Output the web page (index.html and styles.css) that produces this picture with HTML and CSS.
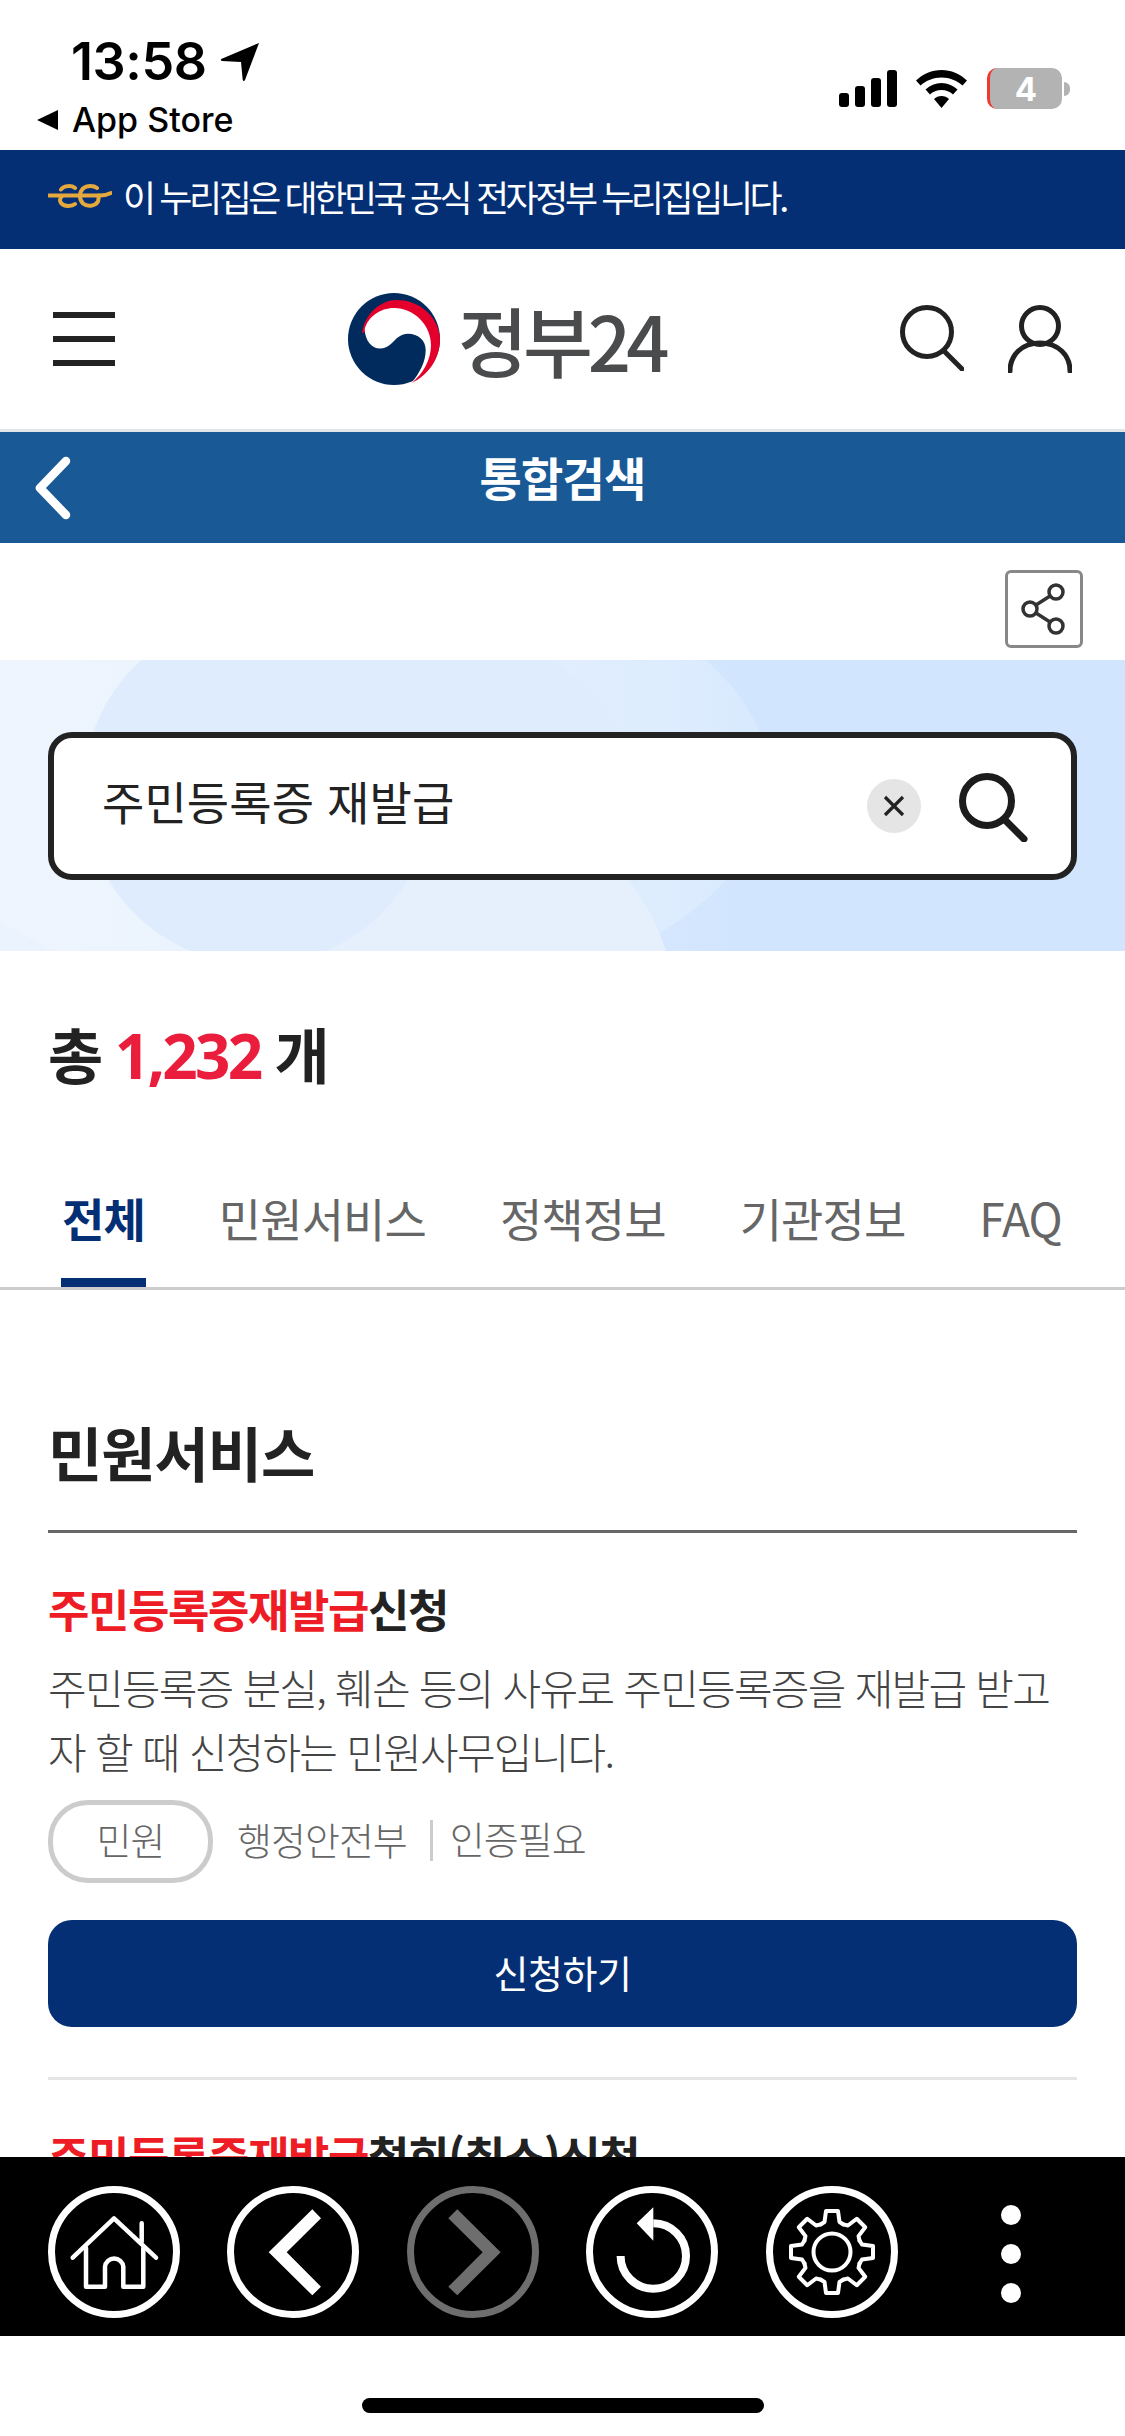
FILE: index.html
```html
<!DOCTYPE html>
<html lang="ko">
<head>
    <meta charset="UTF-8">
    <meta name="viewport" content="width=device-width, initial-scale=1.0">
    <title>정부24 - 통합검색</title>
    <link rel="stylesheet" href="styles.css">
</head>
<body>
    <div class="app">
        <div class="page">
            <!-- iOS status bar -->
            <div class="status">
                <div class="status-left">
                    <div class="time-row">
                        <span class="time">13:58</span>
                        <svg class="loc" width="40" height="40" viewBox="0 0 40 40"><path d="M39 1 25 38c-.6 1.400-2 1.300-2.300-.2L21 20 2 19c-1.500-.3-1.600-1.800-.2-2.300z" fill="#000"/></svg>
                    </div>
                    <div class="back-row">
                        <svg width="21" height="20" viewBox="0 0 21 20"><path d="M21 0v20L0 10z" fill="#000"/></svg>
                        <span>App Store</span>
                    </div>
                </div>
                <div class="status-right">
                    <div class="signal"><i class="b1"></i><i class="b2"></i><i class="b3"></i><i class="b4"></i></div>
                    <svg width="51" height="38" viewBox="0 0 51 38"><path d="M25.500 0C35 0 44 4 51 10.500l-4.500 5C41 10.500 33.500 7.500 25.500 7.500S10 10.500 4.500 15.500L0 10.500C7 4 16 0 25.500 0z" fill="#000"/><path d="M25.500 13c6 0 11.500 2.400 16 6.500l-4.500 5c-3-2.800-7-4.500-11.500-4.500S17 21.700 14 24.500l-4.500-5C14 15.400 19.500 13 25.500 13z" fill="#000"/><path d="M25.500 26c3 0 5.500 1 7.500 3L25.500 38 18 29c2-2 4.500-3 7.500-3z" fill="#000"/></svg>
                    <div class="battery"><span>4</span></div>
                    <div class="nib"></div>
                </div>
            </div>

            <div class="gov-band">
                <svg width="64" height="24" viewBox="0 0 64 24" fill="none" stroke="#e5a83c" stroke-width="4" stroke-linecap="round"><path d="M1 11.500h38M38 11.500h14c4 0 8-1 11-2.500"/><path d="M27 4c-3-2.500-11-3-14 1.500M27 20c-3 2.500-11 3-14-1-2-3-1-5 1-7"/><path d="M49 4c-3-2.500-10-3-14 .5-4 4-4 11 0 15 4 3.500 12 3 15-2l1-6"/></svg>
                <span>이 누리집은 대한민국 공식 전자정부 누리집입니다.</span>
            </div>

            <div class="site-head">
                <div class="burger"><i></i><i></i><i></i></div>
                <div class="logo">
                    <svg width="92" height="92" viewBox="0 0 92 92">
                        <circle cx="46" cy="46" r="46" fill="#002b5c"/>
                        <path d="M14 40C17 20 33 7 49 7c23 0 43 18 43 40 0 18-12 36-28.700 43C75 81 80.500 67 80.500 54L75 40 40 28 20 38z" fill="#e4002b"/>
                        <path d="M16.700 36C20 24 32 15 46 15c20 0 37 17 37 37 0 15-8 29-19.700 38C72 80 77.700 68 77.700 57c0-10-7.700-16.300-17.700-16.300-8 0-12 5.300-16 9.300-4 4-8 5.500-12 5.500-8 0-15-7.500-15.300-19.500z" fill="#fff"/>
                    </svg>
                    <span>정부24</span>
                </div>
                <div class="head-icons">
                    <svg width="64" height="66" viewBox="0 0 64 66" fill="none" stroke="#222" stroke-width="5" stroke-linecap="round"><circle cx="27" cy="27" r="24.500"/><path d="M44 46l18 18"/></svg>
                    <svg width="64" height="68" viewBox="0 0 64 68" fill="none" stroke="#222" stroke-width="5" stroke-linecap="round"><circle cx="32" cy="21" r="18.500"/><path d="M2 66c0-16 12-28 30-28s30 12 30 28"/></svg>
                </div>
            </div>

            <div class="title-bar">
                <svg class="title-back" width="40" height="64" viewBox="0 0 40 64" fill="none" stroke="#fff" stroke-width="8.500" stroke-linecap="round" stroke-linejoin="round"><path d="M33 5 7 32l26 27"/></svg>
                <h1>통합검색</h1>
            </div>

            <div class="share-row">
                <div class="share-btn">
                    <svg width="46" height="52" viewBox="0 0 46 52" fill="none" stroke="#333" stroke-width="3.500"><circle cx="35" cy="9" r="7"/><circle cx="9" cy="26" r="7"/><circle cx="35" cy="43" r="7"/><path d="M29 13 15 22M15 30l14 9"/></svg>
                </div>
            </div>

            <div class="hero">
                <div class="search-box">
                    <span class="query">주민등록증 재발급</span>
                    <div class="clear">
                        <svg width="24" height="24" viewBox="0 0 24 24" fill="none" stroke="#222" stroke-width="3.200"><path d="M3 3l18 18M21 3 3 21"/></svg>
                    </div>
                    <svg class="search-go" width="70" height="70" viewBox="0 0 70 70" fill="none" stroke="#1c1c1c" stroke-width="7" stroke-linecap="round"><circle cx="29" cy="29" r="24.500"/><path d="M47 48l19 19"/></svg>
                </div>
            </div>

            <div class="total">총 <b>1,232</b> 개</div>

            <div class="tabs">
                <a class="tab active">전체</a>
                <a class="tab">민원서비스</a>
                <a class="tab">정책정보</a>
                <a class="tab">기관정보</a>
                <a class="tab">FAQ</a>
            </div>

            <div class="section">
                <h2>민원서비스</h2>
                <div class="item">
                    <h3><em>주민등록증재발급</em>신청</h3>
                    <p>주민등록증 분실, 훼손 등의 사유로 주민등록증을 재발급 받고자 할 때 신청하는 민원사무입니다.</p>
                    <div class="meta">
                        <span class="pill">민원</span>
                        <span class="org">행정안전부</span>
                        <span class="auth">인증필요</span>
                    </div>
                    <div class="apply">신청하기</div>
                </div>
                <div class="item">
                    <h3><em>주민등록증재발급</em>철회(취소)신청</h3>
                </div>
            </div>
        </div>

        <!-- app toolbar -->
        <div class="toolbar">
            <div class="tool">
                <svg width="132" height="132" viewBox="0 0 132 132" fill="none" stroke="#fff" stroke-width="4.500" stroke-linecap="round" stroke-linejoin="round">
                    <circle class="ring" cx="66" cy="66" r="62.500"/>
                    <path d="M24.700 71.700 66 32.300l42 39.400M93.700 37.300v18.400"/>
                    <path d="M38 62v38.700h19v-20a9.200 9.200 0 0 1 18.300 0v20h20V62"/>
                </svg>
            </div>
            <div class="tool">
                <svg width="132" height="132" viewBox="0 0 132 132" fill="none">
                    <circle class="ring" cx="66" cy="66" r="62.500" stroke="#fff"/>
                    <path d="M41.700 66.300 85.300 23.300l8.700 9-34.300 34 34.300 34.400-8.700 8.600z" fill="#fff"/>
                </svg>
            </div>
            <div class="tool">
                <svg width="132" height="132" viewBox="0 0 132 132" fill="none">
                    <circle class="ring" cx="66" cy="66" r="62.500" stroke="#6e6e6e"/>
                    <path d="M93.700 66.300 50.300 23.300l-9 9 34.400 34-34.400 34.400 9 8.600z" fill="#6e6e6e"/>
                </svg>
            </div>
            <div class="tool">
                <svg width="132" height="132" viewBox="0 0 132 132" fill="none">
                    <circle class="ring" cx="66" cy="66" r="62.500" stroke="#fff"/>
                    <path d="M67.300 37.300A32.700 32.700 0 1 1 34.600 70" stroke="#fff" stroke-width="8"/>
                    <path d="M50.700 37.300 67.300 21.300v33.400z" fill="#fff"/>
                </svg>
            </div>
            <div class="tool">
                <svg width="132" height="132" viewBox="0 0 132 132" fill="none" stroke="#fff">
                    <circle class="ring" cx="66" cy="66" r="62.500"/>
                    <circle cx="66" cy="66" r="18.500" stroke-width="4"/>
                    <g transform="translate(66 66)" stroke-width="4" stroke-linejoin="round" stroke-linecap="round">
                        <path id="tooth" d="M-11.500-27.500-7.500-30-6-41H6L7.500-30 11.500-27.500"/>
                        <use href="#tooth" transform="rotate(45)"/>
                        <use href="#tooth" transform="rotate(90)"/>
                        <use href="#tooth" transform="rotate(135)"/>
                        <use href="#tooth" transform="rotate(180)"/>
                        <use href="#tooth" transform="rotate(225)"/>
                        <use href="#tooth" transform="rotate(270)"/>
                        <use href="#tooth" transform="rotate(315)"/>
                    </g>
                </svg>
            </div>
            <div class="tool dots"><i></i><i></i><i></i></div>
        </div>

        <div class="home-area"><div class="home-bar"></div></div>
    </div>
</body>
</html>
```
FILE: styles.css
```css
/* Reset & base */
*{margin:0;padding:0;box-sizing:border-box}
html,body{height:2436px;overflow:hidden;background:#fff}
body{font-family:'Noto Sans CJK KR','Noto Sans',sans-serif;color:#222}
.app{width:1125px;height:2436px;display:flex;flex-direction:column}
.page{flex:1;min-height:0;overflow:hidden}
/* Status bar */
.status{height:150px;display:flex;justify-content:space-between;font-family:Inter,sans-serif;color:#000}
.status-left{padding:38px 0 0 37px}
.time-row{display:flex;align-items:center;gap:13px;padding-left:34px;height:48px}
.time{font-size:52px;font-weight:600;line-height:48px;letter-spacing:-.4px}
.back-row{display:flex;align-items:center;gap:14px;margin-top:17px;height:34px}
.back-row span{font-size:34px;font-weight:500;line-height:34px}
.status-right{display:flex;align-items:flex-start;padding:68px 55px 0 0}
.signal{display:flex;align-items:flex-end;gap:6px;height:37px;margin:2px 19px 0 0}
.signal i{display:block;width:10px;border-radius:3px;background:#000}
.signal .b1{height:14px}
.signal .b2{height:21px}
.signal .b3{height:29px}
.signal .b4{height:37px}
.status-right svg{margin:2px 20px 0 0}
.battery{width:75px;height:41px;border-radius:10px;background:#b3b3b3;border-left:3px solid #f0392e;display:flex;align-items:center;justify-content:center;color:#fff;font-size:33px;font-weight:700}
.nib{width:6px;height:14px;margin:14px 0 0 2px;background:#b3b3b3;border-radius:0 7px 7px 0}
/* Government band */
.gov-band{height:99px;background:#042f75;color:#fff;display:flex;align-items:center;gap:11px;padding:0 0 8px 48px;font-size:36px;letter-spacing:-3.45px}
/* Site header */
.site-head{height:183px;border-bottom:3px solid #e1e4e8;display:flex;align-items:center;padding:0 53px}
.burger{width:62px;display:flex;flex-direction:column;gap:18px}
.burger i{display:block;height:6px;background:#222}
.logo{display:flex;align-items:center;gap:18px;margin-left:233px}
.logo span{font-size:76px;font-weight:500;letter-spacing:-5px;color:#4a4b4d;line-height:92px}
.head-icons{display:flex;gap:44px;margin-left:auto}
/* Title bar */
.title-bar{height:111px;background:#195a96;display:flex;align-items:center;justify-content:center;position:relative}
.title-back{position:absolute;left:33px;top:24px}
.title-bar h1{font-size:46px;font-weight:700;color:#fff;line-height:88px;height:111px;letter-spacing:-.8px}
/* Share */
.share-row{height:117px;display:flex;justify-content:flex-end;padding:27px 42px 0 0}
.share-btn{width:78px;height:78px;border:3px solid #888;border-radius:6px;display:flex;align-items:center;justify-content:center}
/* Hero search */
.hero{height:291px;padding:72px 48px 0;background:
    radial-gradient(circle 175px at 258px 130px,#dfecfd 99.5%,transparent 100%),
    radial-gradient(circle 205px at 470px 350px,#e6f0fd 99.5%,transparent 100%),
    radial-gradient(ellipse 260px 170px at 370px 120px,#dfecfd 99.5%,transparent 100%),
    radial-gradient(ellipse 430px 230px at 340px 120px,rgba(255,255,255,.2) 99.5%,transparent 100%),
    linear-gradient(90deg,#ebf3fe 0,#dcebfd 45%,#d1e5fe 66%)}
.search-box{height:148px;border:6px solid #222;border-radius:24px;background:#fff;display:flex;align-items:center;padding:0 43px 0 48px}
.query{flex:1;font-size:46px;line-height:60px;margin-top:-12px;color:#222;letter-spacing:.1px}
.clear{width:54px;height:54px;border-radius:50%;background:#e5e5e5;display:flex;align-items:center;justify-content:center;margin-right:37px}
.search-go{margin-top:2px}
/* Total */
.total{height:199px;padding:57px 48px 0;font-size:60px;font-weight:700;line-height:90px;letter-spacing:-2.6px;color:#222}
.total b{color:#eb1d3c;font-weight:700;font-size:62px;letter-spacing:-2.8px;font-family:'Noto Sans','Noto Sans CJK KR',sans-serif}
/* Tabs */
.tabs{height:140px;border-bottom:3px solid #ccc;display:flex;padding-left:59px;gap:68px}
.tab{height:137px;padding:9px 3px 0;border-bottom:9px solid transparent;font-size:46px;line-height:116px;letter-spacing:-.9px;color:#666}
.tab.active{color:#042f75;font-weight:700;border-bottom-color:#042f75;padding:9px 1px 0;margin:0 2px}
/* Section */
.section{padding:122px 48px 0}
h2{font-size:59px;font-weight:700;line-height:80px;letter-spacing:-1px;padding-bottom:38px;border-bottom:3px solid #666;color:#222}
.item{padding:46px 0 50px;border-bottom:3px solid #e5e5e5}
h3{font-size:45px;font-weight:700;line-height:60px;letter-spacing:-1.4px;color:#222}
h3 em{font-style:normal;color:#ee1c25}
.item p{margin-top:16px;font-size:42px;line-height:64px;letter-spacing:-1.75px;color:#444;font-weight:300}
.meta{margin-top:17px;height:83px;display:flex;align-items:center;font-size:38px;color:#666;font-weight:300;letter-spacing:-1px}
.pill{width:165px;height:83px;border:5px solid #ccc;border-radius:40px;display:flex;align-items:center;justify-content:center;margin-right:24px;line-height:1;padding-bottom:6px}
.org{padding-right:23px;margin-top:-6px}
.auth{border-left:3px solid #ccc;padding-left:17px;line-height:36px;height:41px;margin-top:-2px}
.apply{margin-top:37px;height:107px;border-radius:24px;background:#042f75;color:#fff;display:flex;align-items:center;justify-content:center;font-size:38px;letter-spacing:-.5px;padding-bottom:5px}
/* Toolbar */
.toolbar{height:179px;background:#000;display:flex;padding:29px 24px 0}
.tool{flex:1 1 0;display:flex;justify-content:center;height:132px}
.ring{stroke-width:7}
.dots{flex-direction:column;align-items:center;gap:19px;padding-top:3px}
.dots i{display:block;width:20px;height:20px;border-radius:50%;background:#fff}
/* Home indicator */
.home-area{height:100px;padding-top:62px;display:flex;justify-content:center}
.home-bar{width:402px;height:15px;border-radius:8px;background:#000}
```
